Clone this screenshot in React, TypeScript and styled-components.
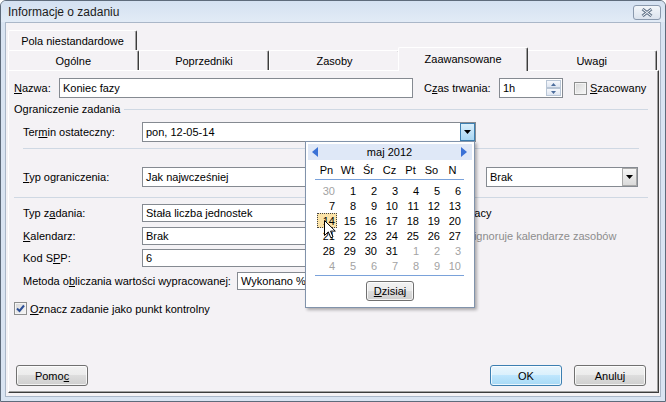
import React from 'react';
import styled, { createGlobalStyle } from 'styled-components';

const GlobalStyle = createGlobalStyle`
  * { box-sizing: border-box; }
  html, body { margin: 0; padding: 0; background: #ffffff; }
  body {
    font-family: "Liberation Sans", Arial, sans-serif;
    font-size: 11px;
    color: #000;
  }
`;

const Window = styled.div`
  width: 666px;
  height: 402px;
  display: flex;
  flex-direction: column;
  border: 1px solid #5e6b7b;
  border-radius: 6px 6px 0 0;
  background: #d9e4f2;
  padding: 0 4px 4px;
  overflow: hidden;
`;

const TitleBar = styled.div`
  height: 21px;
  margin: 0 -4px;
  padding: 0 4px 0 7px;
  display: flex;
  align-items: center;
  justify-content: space-between;
  background: linear-gradient(#d4e1f1, #e2ebf6);
  font-size: 12px;
  color: #1b1b1b;
`;

const CloseButton = styled.div`
  width: 28px;
  height: 15px;
  margin-top: 2px;
  border: 1px solid #8a99ad;
  border-radius: 3px;
  background: linear-gradient(#f3f6fa, #dbe3ed);
  display: flex;
  align-items: center;
  justify-content: center;
`;

const Client = styled.div`
  flex: 1;
  display: flex;
  flex-direction: column;
  background: #f4f2f5;
  border: 1px solid #aab7c8;
  padding: 7px 1px 3px 2px;
`;

const TabRow = styled.div`
  display: flex;
  height: 20px;
  margin-right: 2px;
`;

const Tab = styled.div<{ $active?: boolean; $width?: number }>`
  flex: ${({ $width }) => ($width ? `0 0 ${$width}px` : '1 1 0')};
  display: flex;
  align-items: center;
  justify-content: center;
  height: ${({ $active }) => ($active ? '24px' : '20px')};
  margin: ${({ $active }) => ($active ? '-3px -2px -1px' : '0')};
  padding-bottom: ${({ $active }) => ($active ? '2px' : '0')};
  position: relative;
  z-index: ${({ $active }) => ($active ? 1 : 0)};
  background: #f4f2f5;
  border-top: 1px solid #ffffff;
  border-left: 1px solid #ffffff;
  border-right: 1px solid #3c3c3c;
  box-shadow: inset -1px 0 0 #a0a0a0;
  border-radius: 2px 2px 0 0;
  white-space: nowrap;
`;

const Panel = styled.div`
  flex: 1;
  display: flex;
  flex-direction: column;
  border-top: 1px solid #ffffff;
  border-left: 1px solid #ffffff;
  border-right: 1px solid #3c3c3c;
  border-bottom: 1px solid #3c3c3c;
  box-shadow: inset -1px -1px 0 #a0a0a0;
  padding: 7px 10px 6px 5px;
`;

const Row = styled.div<{ $top?: number; $h?: number; $indent?: number }>`
  display: flex;
  align-items: center;
  height: ${({ $h }) => $h ?? 20}px;
  margin-top: ${({ $top }) => $top ?? 0}px;
  padding-left: ${({ $indent }) => $indent ?? 0}px;
  white-space: nowrap;
`;

const Label = styled.span<{ $w?: number; $gap?: number }>`
  flex: none;
  width: ${({ $w }) => ($w ? `${$w}px` : 'auto')};
  margin-left: ${({ $gap }) => $gap ?? 0}px;
  white-space: nowrap;
`;

const U = styled.span`
  text-decoration: underline;
`;

const GroupHeader = styled.div`
  display: flex;
  align-items: center;
  gap: 4px;
  height: 18px;
  margin-top: 2px;
`;

const Rule = styled.div`
  flex: 1;
  height: 1px;
  background: #cfd8e3;
`;

const Separator = styled.div<{ $top: number; $inset?: number }>`
  height: 1px;
  background: #cfd8e3;
  margin: ${({ $top, $inset }) => `${$top}px ${$inset ?? 0}px 0 ${$inset ?? 0}px`};
`;

const Field = styled.div<{ $w: number; $gap?: number }>`
  position: relative;
  flex: none;
  width: ${({ $w }) => $w}px;
  height: 100%;
  margin-left: ${({ $gap }) => $gap ?? 0}px;
  display: flex;
  align-items: stretch;
  border: 1px solid #858a91;
  background: #ffffff;
`;

const FieldText = styled.span`
  flex: 1;
  display: flex;
  align-items: center;
  padding: 0 3px 1px;
  overflow: hidden;
  white-space: nowrap;
`;

const DropButton = styled.span<{ $hot?: boolean }>`
  flex: none;
  width: 15px;
  display: flex;
  align-items: center;
  justify-content: center;
  border: 1px solid ${({ $hot }) => ($hot ? '#3c7fb1' : '#a9a9a9')};
  background: ${({ $hot }) =>
    $hot ? 'linear-gradient(#d9effc, #a9d6f2)' : 'linear-gradient(#f6f6f6, #dadada)'};
`;

const SpinColumn = styled.div`
  flex: none;
  width: 17px;
  display: flex;
  flex-direction: column;
  padding: 1px;
`;

const SpinButton = styled.span`
  flex: 1;
  display: flex;
  align-items: center;
  justify-content: center;
  border: 1px solid #b9c6d6;
  background: linear-gradient(#f6f8fc, #dfe6f1);
`;

const CheckItem = styled.span<{ $gap?: number; $disabled?: boolean }>`
  display: flex;
  align-items: center;
  gap: 3px;
  margin-left: ${({ $gap }) => $gap ?? 0}px;
  color: ${({ $disabled }) => ($disabled ? '#8d8d8d' : '#000')};
  white-space: nowrap;
`;

const CheckBox = styled.span<{ $disabled?: boolean }>`
  flex: none;
  width: 13px;
  height: 13px;
  display: flex;
  align-items: center;
  justify-content: center;
  border: 1px solid ${({ $disabled }) => ($disabled ? '#bcbcbc' : '#8e8f8f')};
  background: ${({ $disabled }) =>
    $disabled ? '#f4f4f4' : 'linear-gradient(135deg, #d6d6d6, #f8f8f8)'};
  box-shadow: inset 0 0 0 1px #f4f4f4;
`;

const Spacer = styled.div`
  flex: 1;
`;

const ButtonRow = styled.div`
  display: flex;
  align-items: center;
  justify-content: space-between;
  padding: 0 2px 0 2px;
`;

const ButtonGroup = styled.div`
  display: flex;
  gap: 12px;
`;

const PushButton = styled.div<{ $default?: boolean; $w?: number; $h?: number }>`
  width: ${({ $w }) => $w ?? 72}px;
  height: ${({ $h }) => $h ?? 21}px;
  display: flex;
  align-items: center;
  justify-content: center;
  border: 1px solid ${({ $default }) => ($default ? '#3c7fb1' : '#707070')};
  border-radius: 3px;
  background: ${({ $default }) =>
    $default
      ? 'linear-gradient(#eaf6fd 0%, #d9f0fc 50%, #bee6fd 50%, #a7d9f5 100%)'
      : 'linear-gradient(#f2f2f2 0%, #ebebeb 50%, #dddddd 50%, #cfcfcf 100%)'};
  box-shadow: inset 0 0 0 1px rgba(255, 255, 255, 0.75);
`;

/* calendar drop-down */

const Popup = styled.div`
  position: absolute;
  top: 100%;
  right: 0;
  z-index: 10;
  width: 170px;
  display: flex;
  flex-direction: column;
  background: #ffffff;
  border: 1px solid #8193ab;
  box-shadow: 2px 2px 3px rgba(0, 0, 0, 0.3);
  padding: 2px 2px 6px 2px;
`;

const MonthBar = styled.div`
  height: 16px;
  display: flex;
  align-items: center;
  justify-content: space-between;
  padding: 0 5px 0 4px;
  background: #dfe8f7;
`;

const DayGrid = styled.div<{ $rowH: number; $top: number }>`
  display: grid;
  grid-template-columns: repeat(7, 21px);
  grid-auto-rows: ${({ $rowH }) => $rowH}px;
  margin: ${({ $top }) => `${$top}px 8px 0 8px`};
`;

const DayName = styled.div`
  display: flex;
  align-items: center;
  justify-content: center;
`;

const DayCell = styled.div<{ $muted?: boolean; $today?: boolean }>`
  position: relative;
  display: flex;
  align-items: center;
  justify-content: flex-end;
  padding-right: 2px;
  color: ${({ $muted }) => ($muted ? '#a3a3a3' : '#000')};
  background: ${({ $today }) => ($today ? '#fbe3a8' : 'transparent')};
  outline: ${({ $today }) => ($today ? '1px dotted #444' : 'none')};
  outline-offset: -1px;
  margin-left: ${({ $today }) => ($today ? '1px' : '0')};
`;

const CalRule = styled.div<{ $top: number }>`
  height: 1px;
  margin: ${({ $top }) => `${$top}px 8px 0 7px`};
  background: #7aa2da;
`;

const TodayRow = styled.div`
  display: flex;
  justify-content: center;
  margin-top: 5px;
`;

const Cursor = styled.svg`
  position: absolute;
  left: 7px;
  top: 7px;
  z-index: 2;
`;

const Arrow = () => (
  <svg width="7" height="4" viewBox="0 0 7 4">
    <polygon points="0,0 7,0 3.5,4" fill="#000" />
  </svg>
);

const Combo: React.FC<{ w: number; gap?: number; value: string; hot?: boolean; children?: React.ReactNode }> = ({
  w,
  gap,
  value,
  hot,
  children,
}) => (
  <Field $w={w} $gap={gap}>
    <FieldText>{value}</FieldText>
    <DropButton $hot={hot}>
      <Arrow />
    </DropButton>
    {children}
  </Field>
);

const Check: React.FC<{ checked?: boolean; disabled?: boolean }> = ({ checked, disabled }) => (
  <CheckBox $disabled={disabled}>
    {checked && (
      <svg width="9" height="9" viewBox="0 0 9 9">
        <path d="M1 4.5 L3.5 7 L8 1.5" fill="none" stroke="#2c4f97" strokeWidth="2" />
      </svg>
    )}
  </CheckBox>
);

type Day = { n: number; muted?: boolean };

const WEEKDAYS = ['Pn', 'Wt', 'Śr', 'Cz', 'Pt', 'So', 'N'];

const buildDays = (): Day[] => {
  const days: Day[] = [{ n: 30, muted: true }];
  for (let i = 1; i <= 31; i++) days.push({ n: i });
  for (let i = 1; i <= 10; i++) days.push({ n: i, muted: true });
  return days;
};

const Calendar: React.FC = () => (
  <Popup>
    <MonthBar>
      <svg width="6" height="10" viewBox="0 0 6 10">
        <polygon points="6,0 6,10 0,5" fill="#3b72d6" />
      </svg>
      <span>maj 2012</span>
      <svg width="6" height="10" viewBox="0 0 6 10">
        <polygon points="0,0 0,10 6,5" fill="#3b72d6" />
      </svg>
    </MonthBar>
    <DayGrid $rowH={14} $top={3}>
      {WEEKDAYS.map((d) => (
        <DayName key={d}>{d}</DayName>
      ))}
    </DayGrid>
    <CalRule $top={2} />
    <DayGrid $rowH={15} $top={3}>
      {buildDays().map((d, i) => {
        const today = !d.muted && d.n === 14;
        return (
          <DayCell key={i} $muted={d.muted} $today={today}>
            {d.n}
            {today && (
              <Cursor width="12" height="19" viewBox="0 0 12 19">
                <path
                  d="M0.5 0.5 V15.5 L4.3 11.9 L6.8 17.8 L9 16.9 L6.6 11.1 H11.3 Z"
                  fill="#ffffff"
                  stroke="#000000"
                  strokeWidth="1"
                />
              </Cursor>
            )}
          </DayCell>
        );
      })}
    </DayGrid>
    <CalRule $top={2} />
    <TodayRow>
      <PushButton $w={48} $h={20}>
        <span>
          <U>D</U>zisiaj
        </span>
      </PushButton>
    </TodayRow>
  </Popup>
);

const App: React.FC = () => (
  <>
    <GlobalStyle />
    <Window>
      <TitleBar>
        <span>Informacje o zadaniu</span>
        <CloseButton>
          <svg width="12" height="9" viewBox="0 0 12 9">
            <path d="M1.5 1 L10.5 8 M10.5 1 L1.5 8" stroke="#6a7a8e" strokeWidth="3" />
            <path d="M1.5 1 L10.5 8 M10.5 1 L1.5 8" stroke="#f4f7fb" strokeWidth="1" />
          </svg>
        </CloseButton>
      </TitleBar>
      <Client>
        <TabRow>
          <Tab $width={129}>Pola niestandardowe</Tab>
        </TabRow>
        <TabRow>
          <Tab>Ogólne</Tab>
          <Tab>Poprzedniki</Tab>
          <Tab>Zasoby</Tab>
          <Tab $active>Zaawansowane</Tab>
          <Tab>Uwagi</Tab>
        </TabRow>
        <Panel>
          <Row>
            <Label $w={45}>
              <U>N</U>azwa:
            </Label>
            <Field $w={354}>
              <FieldText>Koniec fazy</FieldText>
            </Field>
            <Label $w={75} $gap={11}>
              C<U>z</U>as trwania:
            </Label>
            <Field $w={64}>
              <FieldText>1h</FieldText>
              <SpinColumn>
                <SpinButton>
                  <svg width="5" height="3" viewBox="0 0 5 3">
                    <polygon points="0,3 5,3 2.5,0" fill="#4c6d9c" />
                  </svg>
                </SpinButton>
                <SpinButton>
                  <svg width="5" height="3" viewBox="0 0 5 3">
                    <polygon points="0,0 5,0 2.5,3" fill="#4c6d9c" />
                  </svg>
                </SpinButton>
              </SpinColumn>
            </Field>
            <CheckItem $gap={11}>
              <Check />
              <span>
                <U>S</U>zacowany
              </span>
            </CheckItem>
          </Row>

          <GroupHeader>
            <span>Ograniczenie zadania</span>
            <Rule />
          </GroupHeader>

          <Row $top={4} $indent={9}>
            <Label $w={119}>
              Ter<U>m</U>in ostateczny:
            </Label>
            <Combo w={334} value="pon, 12-05-14" hot>
              <Calendar />
            </Combo>
          </Row>

          <Separator $top={6} $inset={9} />

          <Row $top={18} $indent={9}>
            <Label $w={119}>
              <U>T</U>yp ograniczenia:
            </Label>
            <Combo w={180} value="Jak najwcześniej" />
            <Combo w={152} gap={164} value="Brak" />
          </Row>

          <Separator $top={10} />

          <Row $top={6} $h={18} $indent={9}>
            <Label $w={119}>
              Typ z<U>a</U>dania:
            </Label>
            <Combo w={180} value="Stała liczba jednostek" />
            <CheckItem $gap={25}>
              <Check />
              <span>Oparte na nakładzie pracy</span>
            </CheckItem>
          </Row>
          <Row $top={5} $h={18} $indent={9}>
            <Label $w={119}>
              <U>K</U>alendarz:
            </Label>
            <Combo w={180} value="Brak" />
            <CheckItem $gap={76} $disabled>
              <Check disabled />
              <span>Planowanie ignoruje kalendarze zasobów</span>
            </CheckItem>
          </Row>
          <Row $top={4} $h={18} $indent={9}>
            <Label $w={119}>
              Kod S<U>P</U>P:
            </Label>
            <Field $w={180}>
              <FieldText>6</FieldText>
            </Field>
          </Row>
          <Row $top={5} $h={18} $indent={9}>
            <Label $w={214}>
              Metoda o<U>b</U>liczania wartości wypracowanej:
            </Label>
            <Combo w={130} value="Wykonano %" />
          </Row>

          <Row $top={12} $h={13}>
            <CheckItem>
              <Check checked />
              <span>
                <U>O</U>znacz zadanie jako punkt kontrolny
              </span>
            </CheckItem>
          </Row>

          <Spacer />

          <ButtonRow>
            <PushButton>
              <span>
                Pomo<U>c</U>
              </span>
            </PushButton>
            <ButtonGroup>
              <PushButton $default>OK</PushButton>
              <PushButton>Anuluj</PushButton>
            </ButtonGroup>
          </ButtonRow>
        </Panel>
      </Client>
    </Window>
  </>
);

export default App;
